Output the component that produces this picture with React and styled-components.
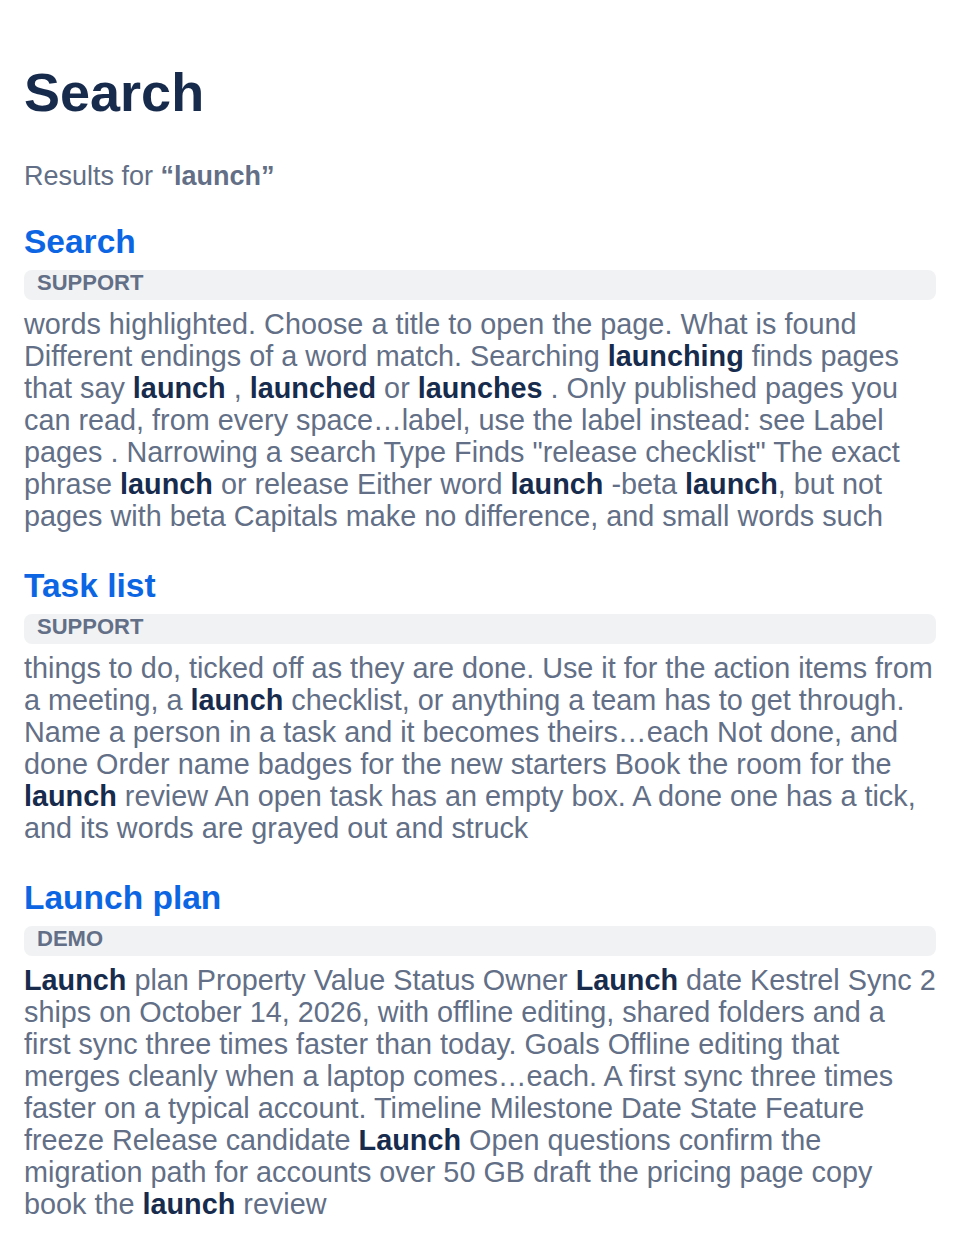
import React from 'react';
import styled, { createGlobalStyle } from 'styled-components';

const GlobalStyle = createGlobalStyle`
  body {
    margin: 0;
    background: #fff;
    font-family: "Liberation Sans", Arial, sans-serif;
  }
`;

const Page = styled.main`
  padding: 60px 24px 40px;
`;

const Heading = styled.h1`
  margin: 0;
  font-size: 54px;
  line-height: 64px;
  font-weight: 700;
  color: #172b4d;
`;

const Summary = styled.p`
  margin: 36px 0 0;
  font-size: 27px;
  line-height: 32px;
  color: #626f86;
  strong {
    color: #626f86;
  }
`;

const Result = styled.section`
  margin-top: ${({ first }) => (first ? '30px' : '34px')};
`;

const Title = styled.a`
  display: block;
  font-size: 33.5px;
  line-height: 40px;
  font-weight: 700;
  color: #0c66e4;
  text-decoration: none;
`;

const Space = styled.div`
  margin-top: 8px;
  height: 30px;
  padding: 0 13px;
  border-radius: 8px;
  background: #f1f2f4;
  font-size: 22px;
  line-height: 25px;
  font-weight: 700;
  text-transform: uppercase;
  color: #626f86;
`;

const Excerpt = styled.p`
  margin: 8px 0 0;
  font-size: 28.8px;
  line-height: 32px;
  color: #626f86;
  b {
    color: #172b4d;
  }
`;

const results = [
  {
    title: 'Search',
    space: 'Support',
    text: 'words highlighted. Choose a title to open the page. What is found Different endings of a word match. Searching **launching** finds pages that say **launch** , **launched** or **launches** . Only published pages you can read, from every space…label, use the label instead: see Label pages . Narrowing a search Type Finds "release checklist" The exact phrase **launch** or release Either word **launch** -beta **launch**, but not pages with beta Capitals make no difference, and small words such',
  },
  {
    title: 'Task list',
    space: 'Support',
    text: 'things to do, ticked off as they are done. Use it for the action items from a meeting, a **launch** checklist, or anything a team has to get through. Name a person in a task and it becomes theirs…each Not done, and done Order name badges for the new starters Book the room for the **launch** review An open task has an empty box. A done one has a tick, and its words are grayed out and struck',
  },
  {
    title: 'Launch plan',
    space: 'Demo',
    text: '**Launch** plan Property Value Status Owner **Launch** date Kestrel Sync 2 ships on October 14, 2026, with offline editing, shared folders and a first sync three times faster than today. Goals Offline editing that merges cleanly when a laptop comes…each. A first sync three times faster on a typical account. Timeline Milestone Date State Feature freeze Release candidate **Launch** Open questions confirm the migration path for accounts over 50 GB draft the pricing page copy book the **launch** review',
  },
];

// every odd piece between ** markers is a hit
const highlight = (text) =>
  text.split('**').map((part, i) => (i % 2 ? <b key={i}>{part}</b> : part));

const App = () => (
  <Page>
    <GlobalStyle />
    <Heading>Search</Heading>
    <Summary>
      Results for <strong>“launch”</strong>
    </Summary>
    {results.map(({ title, space, text }, i) => (
      <Result key={title} first={i === 0}>
        <Title href="#">{title}</Title>
        <Space>{space}</Space>
        <Excerpt>{highlight(text)}</Excerpt>
      </Result>
    ))}
  </Page>
);

export default App;
